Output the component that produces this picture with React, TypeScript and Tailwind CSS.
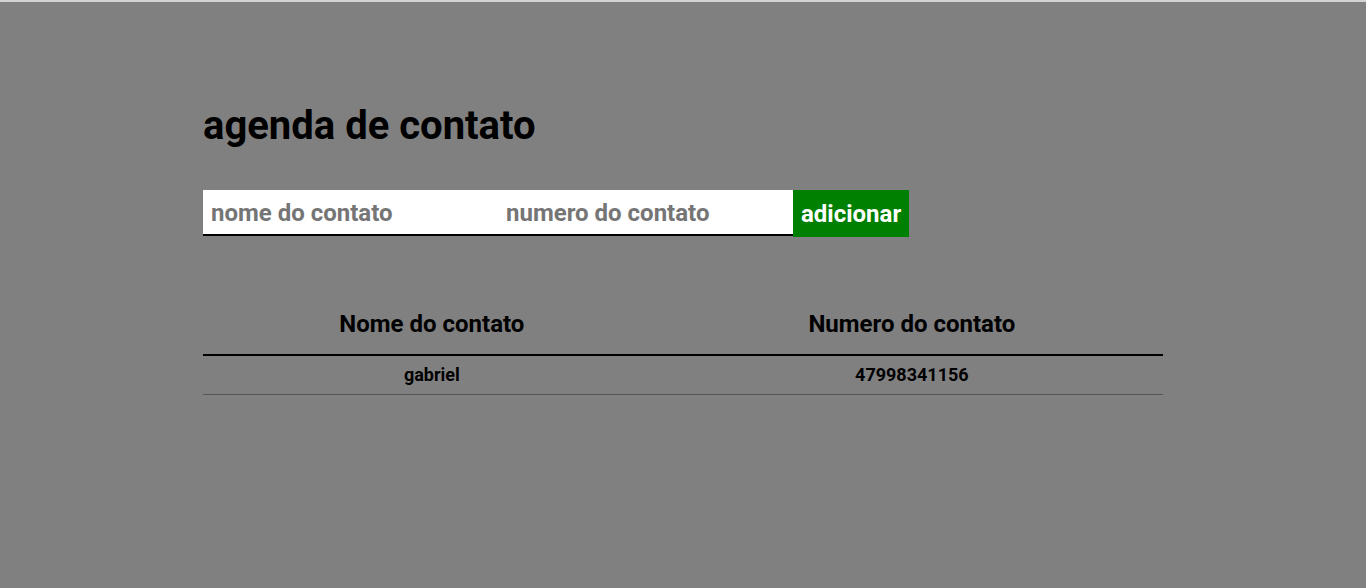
import React, { useState } from 'react';

interface Contato {
    nome: string;
    numero: string;
}

const App: React.FC = () => {
    const [contatos] = useState<Contato[]>([{ nome: 'gabriel', numero: '47998341156' }]);

    return (
        <div className="min-h-[588px] bg-[#808080] font-['Roboto',sans-serif] border-t-2 border-[#d3d3d3]">
            <div className="w-[960px] mx-auto pt-[100px]">
                <h1 className="text-[40px] font-bold text-black leading-[47px]">agenda de contato</h1>

                <form className="flex items-start mt-[41px]" onSubmit={(e) => e.preventDefault()}>
                    <input
                        type="text"
                        placeholder="nome do contato"
                        className="w-[295px] h-[46px] bg-white border-b-2 border-black px-2 pt-[2px] text-[24px] font-bold outline-none placeholder:text-[#757575]"
                    />
                    <input
                        type="text"
                        placeholder="numero do contato"
                        className="w-[295px] h-[46px] bg-white border-b-2 border-black px-2 pt-[2px] text-[24px] font-bold outline-none placeholder:text-[#757575]"
                    />
                    <button className="h-[47px] px-2 bg-[#008000] text-white text-[24px] font-bold">adicionar</button>
                </form>

                <table className="w-full mt-[57px] border-collapse">
                    <thead>
                        <tr className="border-b-2 border-black">
                            <th className="py-4 pl-1 text-[24px] leading-[28px] font-bold text-black">Nome do contato</th>
                            <th className="py-4 pl-1 text-[24px] leading-[28px] font-bold text-black">Numero do contato</th>
                        </tr>
                    </thead>
                    <tbody>
                        {contatos.map((c) => (
                            <tr key={c.numero} className="border-b border-[#555]">
                                <td className="py-2 pl-1 text-center text-[18px] leading-[22px] font-bold text-black">{c.nome}</td>
                                <td className="py-2 pl-1 text-center text-[18px] leading-[22px] font-bold text-black">{c.numero}</td>
                            </tr>
                        ))}
                    </tbody>
                </table>
            </div>
        </div>
    );
};

export default App;
